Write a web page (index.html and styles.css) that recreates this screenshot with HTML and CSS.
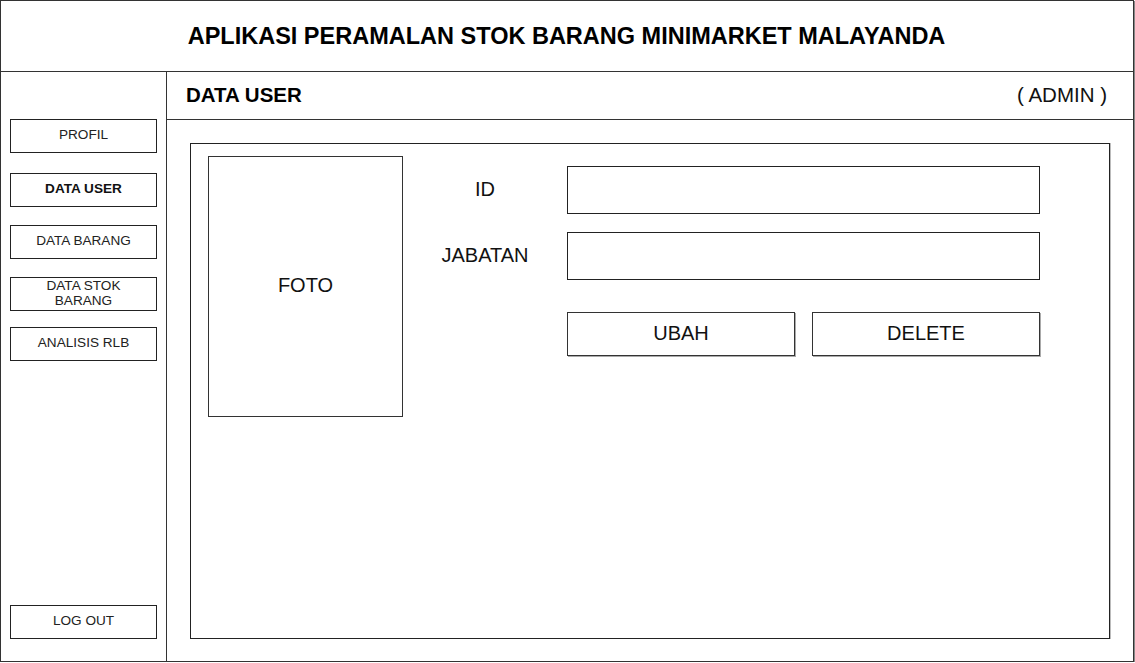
FILE: index.html
```html
<!DOCTYPE html>
<html>
<head>
<meta charset="utf-8">
<link rel="stylesheet" href="styles.css">
</head>
<body>
<div class="frame">
  <header class="header">
    <h1 class="title">APLIKASI PERAMALAN STOK BARANG MINIMARKET MALAYANDA</h1>
  </header>
  <div class="body">
    <aside class="sidebar">
      <a class="nav-btn nav-first">PROFIL</a>
      <a class="nav-btn nav-active">DATA USER</a>
      <a class="nav-btn">DATA BARANG</a>
      <a class="nav-btn nav-two">DATA STOK<br>BARANG</a>
      <a class="nav-btn nav-last">ANALISIS RLB</a>
      <a class="nav-btn nav-logout">LOG OUT</a>
    </aside>
    <main class="main">
      <div class="main-head">
        <span class="page-title">DATA USER</span>
        <span class="role">( ADMIN )</span>
      </div>
      <div class="main-content">
        <section class="panel">
          <div class="foto">FOTO</div>
          <div class="form">
            <label class="label">ID</label>
            <div class="field"></div>
            <label class="label">JABATAN</label>
            <div class="field"></div>
            <div class="actions">
              <button class="btn">UBAH</button>
              <button class="btn">DELETE</button>
            </div>
          </div>
        </section>
      </div>
    </main>
  </div>
</div>
</body>
</html>
```
FILE: styles.css
```css
* { box-sizing: border-box; }
html, body { margin: 0; padding: 0; background: #fff; }
body { font-family: "Liberation Sans", Arial, sans-serif; color: #111; }

.frame {
  width: 1134px;
  height: 662px;
  border: 1px solid #333;
  box-shadow: 1px 1px 0 #888;
  display: grid;
  grid-template-rows: 71px 1fr;
}

.header {
  border-bottom: 1px solid #333;
  display: flex;
  align-items: center;
  justify-content: center;
}
.title {
  margin: 0;
  font-size: 23.5px;
  font-weight: bold;
  padding-right: 1px;
  color: #000;
}

.body {
  display: grid;
  grid-template-columns: 166px 1fr;
  min-height: 0;
}

.sidebar {
  border-right: 1px solid #333;
  display: flex;
  flex-direction: column;
  padding: 47px 9px 22px 9px;
}
.nav-btn {
  display: flex;
  align-items: center;
  justify-content: center;
  text-align: center;
  height: 34px;
  border: 1px solid #222;
  font-size: 13.6px;
  line-height: 15px;
  color: #222;
  margin-top: 18px;
  padding-bottom: 3px;
}
.nav-first { margin-top: 0; }
.nav-active { font-weight: bold; color: #111; margin-top: 20px; }
.nav-two { margin-top: 18px; padding-bottom: 2px; }
.nav-last { margin-top: 16px; }
.nav-logout { margin-top: auto; }

.main {
  display: grid;
  grid-template-rows: 48px 1fr;
  min-height: 0;
}
.main-head {
  border-bottom: 1px solid #333;
  display: flex;
  align-items: center;
  justify-content: space-between;
  padding: 0 26px 2px 19px;
}
.page-title { font-size: 20.5px; font-weight: bold; color: #000; }
.role { font-size: 20.5px; color: #111; }

.main-content {
  padding: 23px 23px 22px 23px;
  min-height: 0;
}
.panel {
  height: 100%;
  border: 1px solid #222;
  box-shadow: 1px 0 0 #bbb;
  display: flex;
  align-items: flex-start;
  padding: 12px 17px;
}

.foto {
  width: 195px;
  height: 261px;
  border: 1px solid #333;
  display: flex;
  align-items: center;
  justify-content: center;
  font-size: 20px;
  color: #111;
  padding-bottom: 2px;
}

.form {
  margin-top: 10px;
  display: grid;
  grid-template-columns: 164px 473px;
  grid-template-rows: 48px 48px auto;
  row-gap: 18px;
}
.label {
  display: flex;
  align-items: center;
  justify-content: center;
  font-size: 20px;
  color: #111;
  padding-bottom: 2px;
}
.field {
  border: 1px solid #222;
}
.actions {
  grid-column: 2;
  margin-top: 14px;
  height: 44px;
  display: grid;
  grid-template-columns: 228px 228px;
  column-gap: 17px;
}
.btn {
  font-family: "Liberation Sans", Arial, sans-serif;
  font-size: 20px;
  color: #111;
  background: #fff;
  border: 1px solid #333;
  box-shadow: 1px 1px 0 #aaa;
  padding: 0 0 2px 0;
  margin: 0;
}
```
